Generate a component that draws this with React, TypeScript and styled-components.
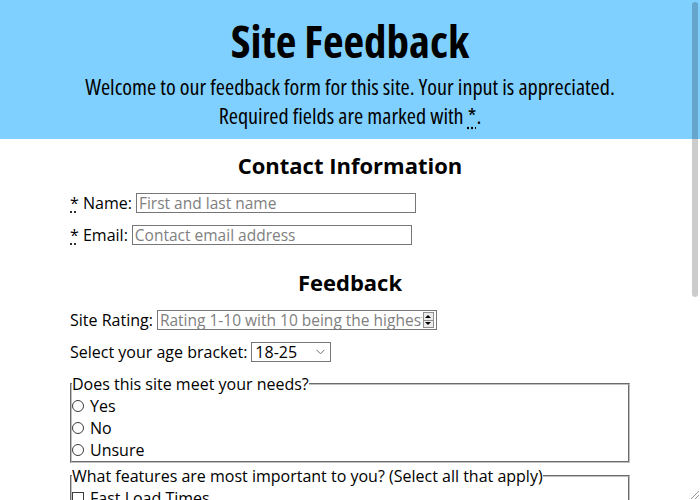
import React from "react";
import styled, { createGlobalStyle } from "styled-components";

const GlobalStyle = createGlobalStyle`
  html, body { margin: 0; padding: 0; overflow: hidden; }
  body {
    font-family: "Open Sans", "Liberation Sans", sans-serif;
    font-size: 16px;
    color: #000;
    background: #fff;
  }
`;

const PageHeader = styled.header`
  background: #80d0ff;
  padding: 16px 0 9px;
  text-align: center;
  font-family: "Open Sans", sans-serif;
  font-stretch: 75%;
`;

const Title = styled.h1`
  margin: 0;
  font-size: 45px;
  line-height: 50px;
  font-weight: 700;
`;

const Intro = styled.p`
  margin: 6px 0 0;
  font-size: 22.2px;
  line-height: 29px;
`;

const Req = styled.abbr`
  text-decoration: underline dotted;
  text-underline-offset: 3px;
  cursor: help;
`;

const Main = styled.main`
  width: 560px;
  margin: 0 auto;
  padding: 11px 0 40px;
`;

const Section = styled.section<{ $spaced?: boolean }>`
  padding-top: ${p => (p.$spaced ? "11px" : "0")};
`;

const SectionTitle = styled.h2`
  margin: 0 0 12px;
  font-size: 22px;
  line-height: 30px;
  font-weight: 700;
  text-align: center;
`;

const FieldRow = styled.div`
  display: flex;
  align-items: center;
  gap: 4px;
  height: 22px;
  margin-bottom: 10px;
  white-space: nowrap;
`;

const Label = styled.label`
  line-height: 22px;
`;

const TextInput = styled.input`
  box-sizing: border-box;
  width: 280px;
  height: 20px;
  padding: 0 2px;
  border: 1px solid #767676;
  border-radius: 0;
  font-family: "Open Sans", sans-serif;
  font-size: 15.5px;
  line-height: 18px;
  color: #000;
  background: #fff;
  outline: none;
  &::placeholder {
    color: #808080;
  }
`;

const NumberBox = styled.span`
  box-sizing: border-box;
  display: inline-flex;
  align-items: stretch;
  width: 280px;
  height: 20px;
  border: 1px solid #767676;
  background: #fff;
`;

const NumberField = styled.input`
  flex: 1;
  min-width: 0;
  border: none;
  padding: 0 0 0 2px;
  font-family: "Open Sans", sans-serif;
  font-size: 15.5px;
  line-height: 18px;
  outline: none;
  background: transparent;
  &::placeholder {
    color: #808080;
  }
`;

const Spinner = styled.span`
  display: flex;
  flex-direction: column;
  width: 9px;
  margin: 1px 2px 1px 1px;
  border: 1px solid #8f8f8f;
  background: #ececec;
`;

const SpinHalf = styled.span<{ $down?: boolean }>`
  flex: 1;
  display: flex;
  align-items: center;
  justify-content: center;
  border-top: ${p => (p.$down ? "1px solid #8f8f8f" : "none")};
  &::after {
    content: "";
    width: 0;
    height: 0;
    border-left: 3px solid transparent;
    border-right: 3px solid transparent;
    ${p =>
      p.$down ? "border-top: 3px solid #000;" : "border-bottom: 3px solid #000;"}
  }
`;

const SelectBox = styled.span`
  box-sizing: border-box;
  display: inline-flex;
  align-items: center;
  width: 80px;
  height: 20px;
  border: 1px solid #767676;
  background: #fff;
`;

const Select = styled.select`
  appearance: none;
  flex: 1;
  min-width: 0;
  border: none;
  padding: 0 0 0 3px;
  font-family: "Open Sans", sans-serif;
  font-size: 16px;
  line-height: 18px;
  background: transparent;
  color: #000;
  outline: none;
`;

const Chevron = styled.svg`
  width: 9px;
  height: 6px;
  margin-right: 5px;
  flex: none;
`;

const Group = styled.fieldset`
  margin: 0 0 2px;
  padding: 0;
  border: 2px groove #c0c0c0;
  min-width: 0;
`;

const Legend = styled.legend`
  padding: 0;
  font-size: 16px;
  line-height: 22px;
`;

const Choice = styled.label`
  display: flex;
  align-items: center;
  height: 22px;
  line-height: 22px;
`;

const Radio = styled.input.attrs({ type: "radio" })`
  appearance: none;
  box-sizing: border-box;
  width: 12px;
  height: 12px;
  margin: 0 6px 0 0;
  border: 1px solid #3b3b3b;
  border-radius: 50%;
  background: #fff;
`;

const Check = styled.input.attrs({ type: "checkbox" })`
  appearance: none;
  box-sizing: border-box;
  width: 12px;
  height: 12px;
  margin: 0 6px 0 0;
  border: 1px solid #3b3b3b;
  border-radius: 0;
  background: #fff;
`;

const Comments = styled.textarea`
  display: block;
  width: 100%;
  box-sizing: border-box;
  height: 80px;
  margin-top: 10px;
  font-family: "Open Sans", sans-serif;
  font-size: 15px;
`;

const ScrollThumb = styled.div`
  position: fixed;
  top: 2px;
  right: 2px;
  width: 6px;
  height: 295px;
  border-radius: 3px;
  background: rgba(0, 0, 0, 0.2);
`;

const ResizeGrip = styled.svg`
  position: fixed;
  right: 0;
  bottom: 0;
  width: 12px;
  height: 12px;
`;

export default function App() {
  return (
    <>
      <GlobalStyle />
      <PageHeader>
        <Title>Site Feedback</Title>
        <Intro>
          Welcome to our feedback form for this site. Your input is appreciated.
          <br />
          Required fields are marked with <Req title="required">*</Req>.
        </Intro>
      </PageHeader>
      <Main>
        <Section>
          <SectionTitle>Contact Information</SectionTitle>
          <FieldRow>
            <Label htmlFor="name">
              <Req title="required">*</Req> Name:
            </Label>
            <TextInput id="name" type="text" placeholder="First and last name" />
          </FieldRow>
          <FieldRow>
            <Label htmlFor="email">
              <Req title="required">*</Req> Email:
            </Label>
            <TextInput id="email" type="email" placeholder="Contact email address" />
          </FieldRow>
        </Section>
        <Section $spaced>
          <SectionTitle>Feedback</SectionTitle>
          <FieldRow>
            <Label htmlFor="rating">Site Rating:</Label>
            <NumberBox>
              <NumberField
                id="rating"
                type="text"
                placeholder="Rating 1-10 with 10 being the highest"
              />
              <Spinner>
                <SpinHalf />
                <SpinHalf $down />
              </Spinner>
            </NumberBox>
          </FieldRow>
          <FieldRow>
            <Label htmlFor="age">Select your age bracket:</Label>
            <SelectBox>
              <Select id="age" defaultValue="18-25">
                <option>Under 18</option>
                <option>18-25</option>
                <option>26-35</option>
                <option>36-50</option>
                <option>Over 50</option>
              </Select>
              <Chevron viewBox="0 0 9 6">
                <path d="M0.5 0.8 L4.5 4.8 L8.5 0.8" fill="none" stroke="#6d6d6d" strokeWidth="1" />
              </Chevron>
            </SelectBox>
          </FieldRow>
          <Group>
            <Legend>Does this site meet your needs?</Legend>
            <Choice>
              <Radio name="needs" value="yes" /> Yes
            </Choice>
            <Choice>
              <Radio name="needs" value="no" /> No
            </Choice>
            <Choice>
              <Radio name="needs" value="unsure" /> Unsure
            </Choice>
          </Group>
          <Group>
            <Legend>What features are most important to you? (Select all that apply)</Legend>
            <Choice>
              <Check /> Fast Load Times
            </Choice>
            <Choice>
              <Check /> Easy Navigation
            </Choice>
            <Choice>
              <Check /> Clear Content
            </Choice>
            <Choice>
              <Check /> Mobile Friendly
            </Choice>
          </Group>
          <Comments placeholder="Additional comments" />
        </Section>
      </Main>
      <ScrollThumb />
      <ResizeGrip viewBox="0 0 12 12">
        <path d="M11 3 L3 11 M11 7 L7 11" stroke="#9a9a9a" strokeWidth="1" />
      </ResizeGrip>
    </>
  );
}
